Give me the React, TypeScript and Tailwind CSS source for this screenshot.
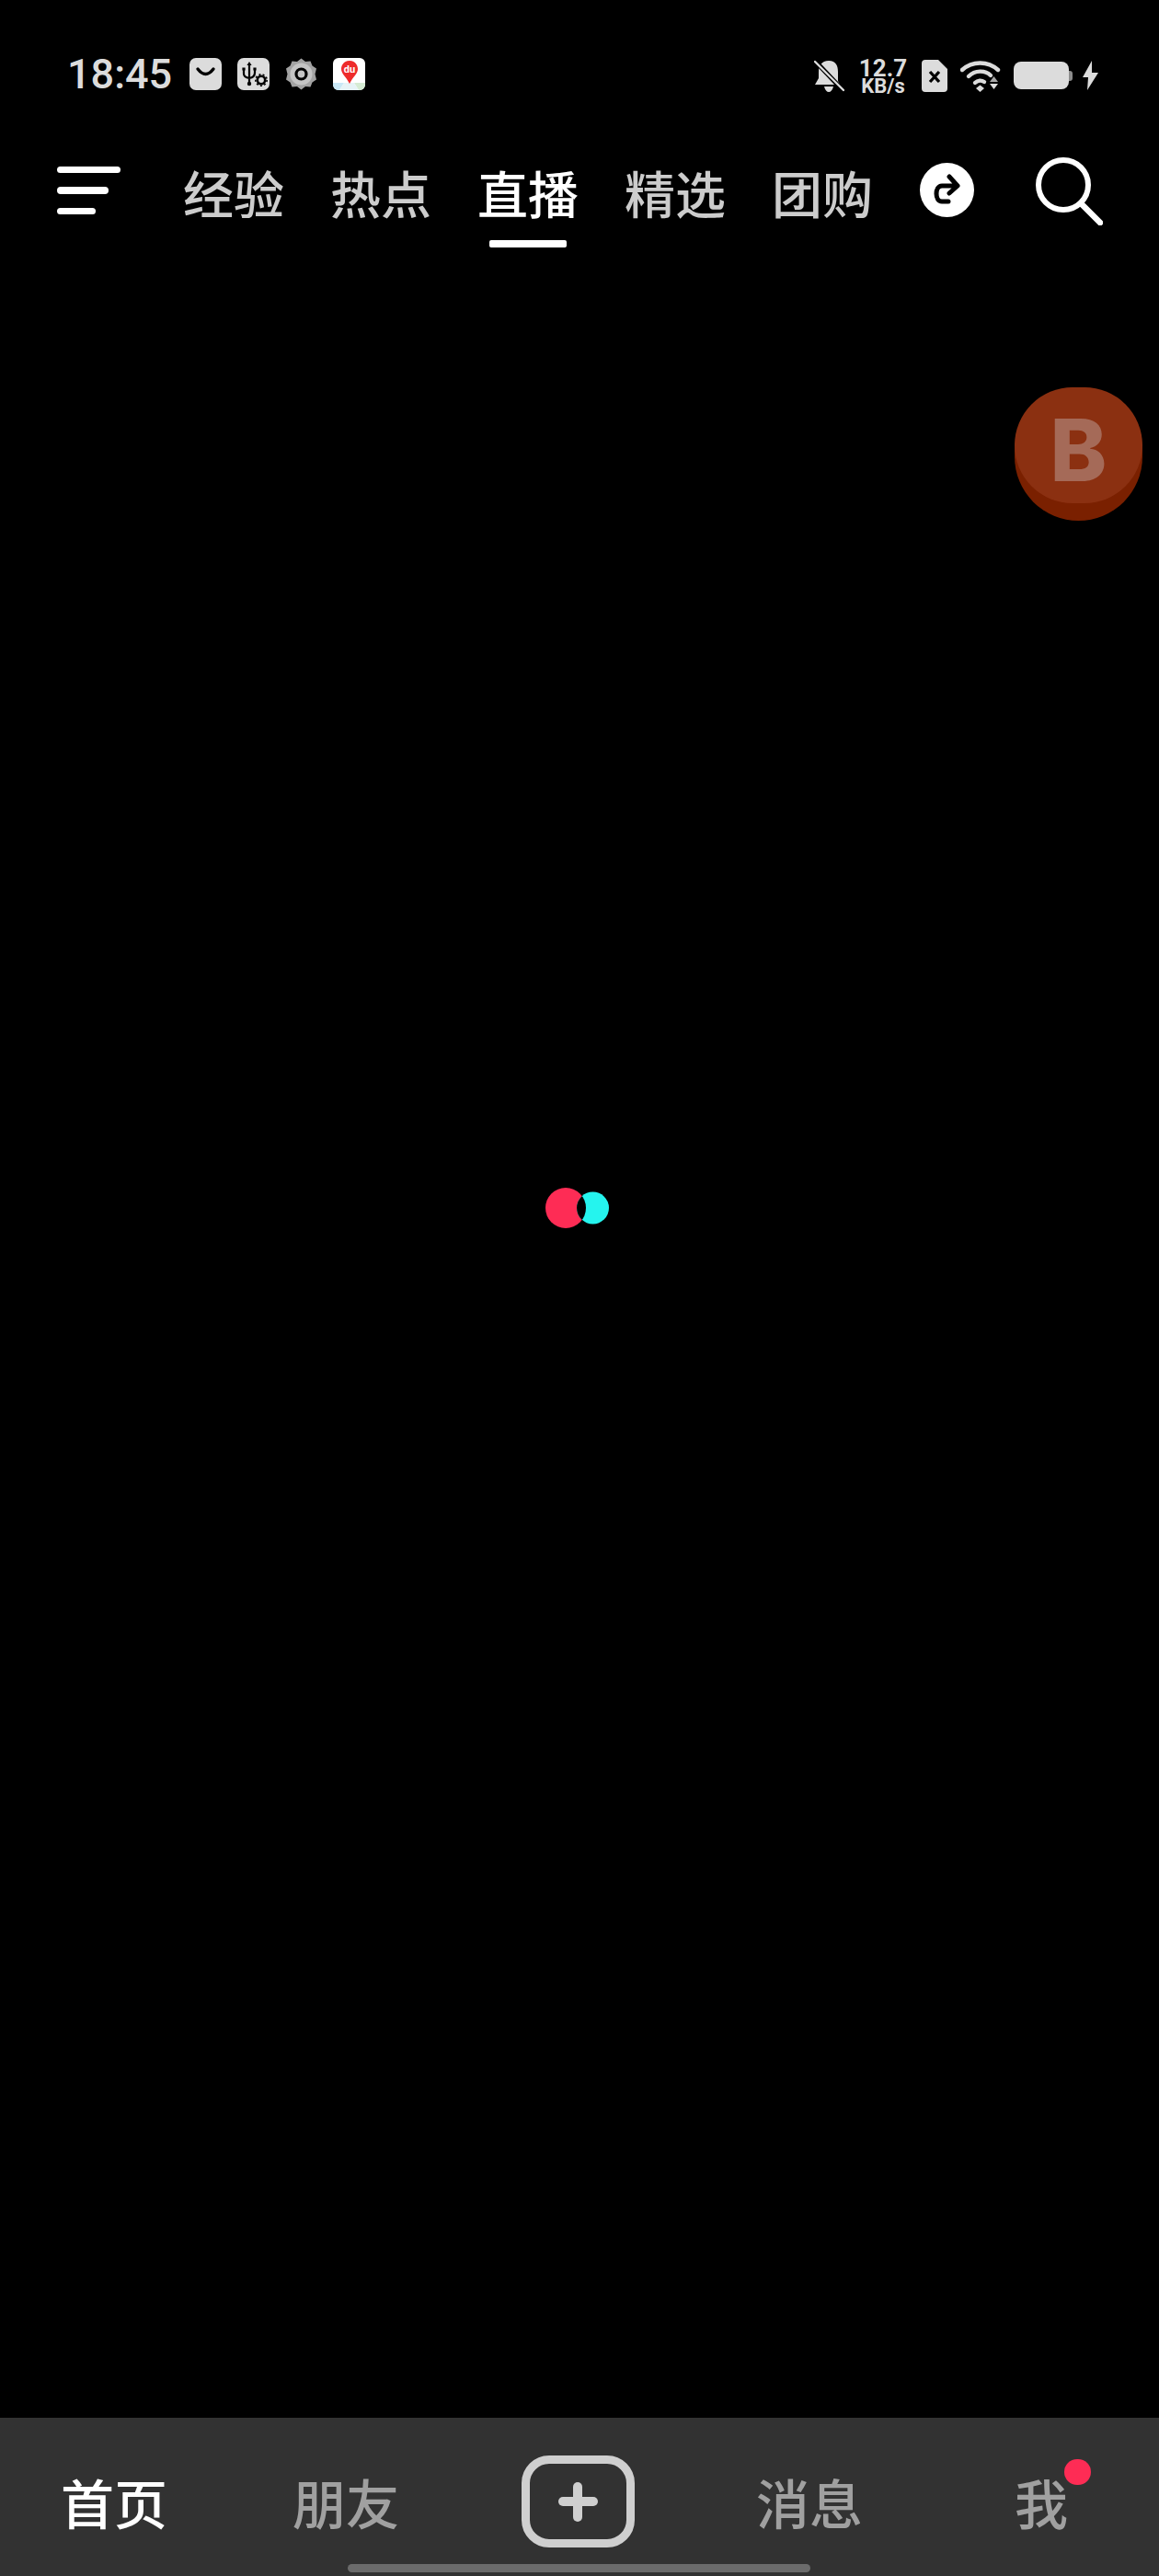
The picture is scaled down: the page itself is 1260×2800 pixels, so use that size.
import React from 'react';

const cjk = { fontFamily: '"Noto Sans CJK SC", sans-serif' };

const topTabs = ['经验', '热点', '直播', '精选', '团购'];
const bottomTabs = ['首页', '朋友', '+', '消息', '我'];

const IconBag = () => (
   <svg width="35" height="35" viewBox="0 0 35 35" className="shrink-0">
      <rect width="35" height="35" rx="7" fill="#dcdcdc" />
      <path d="M9 12 Q17.5 23 26 12" fill="none" stroke="#000" strokeWidth="3.4" strokeLinecap="round" />
   </svg>
);

const IconUsb = () => (
   <svg width="35" height="35" viewBox="0 0 35 35" className="shrink-0">
      <rect width="35" height="35" rx="7" fill="#dcdcdc" />
      <path d="M13 7 V29 M7 13 V17 Q7 21 13 22 Q19 21 19 16 V13" fill="none" stroke="#000" strokeWidth="2.2" />
      <path d="M13 4 L15.6 8 H10.4 Z M5.4 10.5 H8.6 V13.5 H5.4 Z M17.4 10.5 H20.6 V13.5 H17.4 Z" fill="#000" />
      <circle cx="13" cy="28" r="2.2" fill="#000" />
      <circle cx="26" cy="24" r="4.2" fill="none" stroke="#000" strokeWidth="2.6" />
      <circle cx="26" cy="24" r="6.2" fill="none" stroke="#000" strokeWidth="1.6" strokeDasharray="2 2.3" />
   </svg>
);

const IconGear = () => (
   <svg width="35" height="35" viewBox="0 0 35 35" className="shrink-0">
      <path
         d="M17.5 0.5 L22 4 L27.5 3.5 L29.5 8.5 L34 11.5 L32.5 17.5 L34 23.5 L29.5 26.5 L27.5 31.5 L22 31 L17.5 34.5 L13 31 L7.5 31.5 L5.5 26.5 L1 23.5 L2.5 17.5 L1 11.5 L5.5 8.5 L7.5 3.5 L13 4 Z"
         fill="#a2a2a2"
      />
      <circle cx="17.5" cy="17.5" r="12" fill="#c4c4c4" />
      <circle cx="17.5" cy="17.5" r="5.5" fill="#c4c4c4" stroke="#000" strokeWidth="3.2" />
   </svg>
);

const IconMap = () => (
   <svg width="35" height="35" viewBox="0 0 35 35" className="shrink-0">
      <defs>
         <clipPath id="map-clip">
            <rect width="35" height="35" rx="6" />
         </clipPath>
      </defs>
      <g clipPath="url(#map-clip)">
         <rect width="35" height="35" fill="#ffffff" />
         <path d="M0 27 H12 L7 35 H0 Z" fill="#c9e8f6" />
         <path d="M23 27 H35 V35 H28 Z" fill="#d5ebd3" />
         <path d="M12 27 H23 L28 35 H7 Z" fill="#e6f3f6" />
      </g>
      <path d="M18 3 C11 3 9 9 9 12 C9 17 14 20 18 28 C22 20 27 17 27 12 C27 9 25 3 18 3 Z" fill="#ee2b2b" />
      <text x="18" y="16" textAnchor="middle" fontSize="11" fontWeight="700" fill="#fff" fontFamily="Roboto, sans-serif">
         du
      </text>
   </svg>
);

const IconBellOff = () => (
   <svg width="33" height="35" viewBox="0 0 33 35" className="shrink-0">
      <path
         d="M16 1 C8 1 5 7 5 13 V20 L1 27 H28 L26 23 V13 C26 7 24 1 16 1 Z M11 29 H21 C20 33 18 35 16 35 C14 35 12 33 11 29 Z"
         fill="#dcdcdc"
      />
      <path d="M0 0 L33 35" stroke="#000" strokeWidth="5" />
      <path d="M1 2 L32 33" stroke="#dcdcdc" strokeWidth="2.4" strokeLinecap="round" />
   </svg>
);

const IconSim = () => (
   <svg width="28" height="35" viewBox="0 0 28 35" className="shrink-0">
      <path d="M4 0 H18 L28 10 V31 Q28 35 24 35 H4 Q0 35 0 31 V4 Q0 0 4 0 Z" fill="#dcdcdc" />
      <path d="M9 13 L19 24 M19 13 L9 24" stroke="#000" strokeWidth="3.2" />
   </svg>
);

const IconWifi = () => (
   <svg width="44" height="35" viewBox="0 0 44 35" className="shrink-0">
      <path d="M2 11 C13 1 30 1 41 11" fill="none" stroke="#dcdcdc" strokeWidth="4.4" strokeLinecap="round" />
      <path d="M9 18 C16 11 27 11 33 17" fill="none" stroke="#dcdcdc" strokeWidth="4.4" strokeLinecap="round" />
      <path d="M16 25 C19 22 23 22 26 24" fill="none" stroke="#dcdcdc" strokeWidth="4.4" strokeLinecap="round" />
      <path d="M17 31 L21.5 27.5 L26 31 L21.5 35 Z" fill="#dcdcdc" />
      <path d="M36.5 18 L41 24 H32 Z" fill="#a8a8a8" />
      <path d="M32 26 H41 L36.5 32 Z" fill="#dcdcdc" />
   </svg>
);

const IconBolt = () => (
   <svg width="17" height="32" viewBox="0 0 17 32" className="shrink-0">
      <path d="M10 0 L0 18 H6 L5 32 L17 13 H10 Z" fill="#dcdcdc" />
   </svg>
);

const IconShare = () => (
   <svg width="59" height="59" viewBox="0 0 59 59" className="shrink-0">
      <circle cx="29.5" cy="29.5" r="29.5" fill="#fff" />
      <path
         d="M38 25 H24 C16 25 16 42 24 42 H31 M32 15 L41 25 L32 33"
         fill="none"
         stroke="#000"
         strokeWidth="5"
         strokeLinecap="round"
         strokeLinejoin="round"
      />
   </svg>
);

const IconSearch = () => (
   <svg width="73" height="74" viewBox="0 0 73 74" className="shrink-0">
      <circle cx="30" cy="30" r="27" fill="none" stroke="#fff" strokeWidth="6" />
      <path d="M49 50 L70 71" stroke="#fff" strokeWidth="6.5" strokeLinecap="round" />
   </svg>
);

const LoadingDots = () => (
   <svg width="69" height="44" viewBox="0 0 69 44">
      <defs>
         <clipPath id="red-dot">
            <circle cx="22" cy="22" r="22" />
         </clipPath>
      </defs>
      <circle cx="22" cy="22" r="22" fill="#fe2c55" />
      <circle cx="51.5" cy="22" r="17.5" fill="#25f4ee" />
      <circle cx="51.5" cy="22" r="17.5" fill="#000" clipPath="url(#red-dot)" />
   </svg>
);

export default function App() {
   return (
      <div className="relative flex h-[2800px] w-[1260px] flex-col overflow-hidden bg-black" style={cjk}>
         {/* status bar */}
         <div className="flex h-[158px] items-start pl-[73px] pt-[63px]">
            <span
               className="h-[35px] w-[133px] text-[45px] font-medium leading-[35px] text-[#dcdcdc]"
               style={{ fontFamily: 'Roboto, sans-serif' }}
            >
               18:45
            </span>
            <div className="flex items-center gap-[17px]">
               <IconBag />
               <IconUsb />
               <IconGear />
               <IconMap />
            </div>
            <div className="ml-[488px] flex items-center">
               <IconBellOff />
               <div
                  className="ml-[17px] flex w-[50px] flex-col items-center text-[#dcdcdc]"
                  style={{ fontFamily: 'Roboto, sans-serif' }}
               >
                  <span className="h-[22px] text-[26px] font-bold leading-[22px]">12.7</span>
                  <span className="h-[16px] text-[22px] font-bold leading-[18px]">KB/s</span>
               </div>
               <div className="ml-[17px]">
                  <IconSim />
               </div>
               <div className="ml-[14px]">
                  <IconWifi />
               </div>
               <div className="ml-[14px] flex items-center">
                  <div className="h-[30px] w-[60px] rounded-[8px] bg-[#dcdcdc]" />
                  <div className="h-[11px] w-[4px] rounded-r-[3px] bg-[#8c8c8c]" />
               </div>
               <div className="ml-[11px]">
                  <IconBolt />
               </div>
            </div>
         </div>

         {/* top tabs */}
         <div className="flex h-[112px] items-start pl-[62px]">
            <div className="mt-[23px] flex w-[69px] shrink-0 flex-col gap-[15px]">
               <div className="h-[7px] w-[69px] rounded-full bg-white" />
               <div className="h-[8px] w-[56px] rounded-full bg-white" />
               <div className="h-[7px] w-[42px] rounded-full bg-white" />
            </div>
            <div className="ml-[69px] flex gap-[52px] pt-[20px]">
               {topTabs.map((tab) => (
                  <div key={tab} className="flex w-[108px] flex-col items-center">
                     <span
                        className={`h-[60px] whitespace-nowrap text-[55px] font-medium leading-[60px] ${
                           tab === '直播' ? 'text-white' : 'text-[#cccccc]'
                        }`}
                     >
                        {tab}
                     </span>
                     <div className={`mt-[23px] h-[8px] w-[84px] rounded-[2px] ${tab === '直播' ? 'bg-white' : 'bg-transparent'}`} />
                  </div>
               ))}
            </div>
            <div className="ml-[52px] mt-[19px]">
               <IconShare />
            </div>
            <div className="ml-[67px] mt-[13px]">
               <IconSearch />
            </div>
         </div>

         {/* content, just the loader */}
         <div className="flex flex-1 justify-center pr-[5px] pt-[1021px]">
            <LoadingDots />
         </div>

         {/* floating red button */}
         <div className="absolute left-[1103px] top-[421px] h-[145px] w-[139px] rounded-full bg-[#7a2000]">
            <div
               className="flex h-[126px] w-[139px] items-center justify-center rounded-full bg-[#8b3011] pt-[12px] text-[93px] font-extrabold text-[#a56a58]"
               style={{ fontFamily: 'Inter, sans-serif' }}
            >
               B
            </div>
         </div>

         {/* bottom tabs */}
         <div className="relative grid h-[172px] grid-cols-5 bg-[#323232]">
            {bottomTabs.map((tab, i) => (
               <div key={tab} className="flex h-[172px] items-start justify-center pr-[4px] pt-[41px]">
                  {tab === '+' ? (
                     <div className="flex h-[100px] w-[123px] items-center justify-center rounded-[30px] border-[9px] border-[#cfcfcf]">
                        <div className="relative h-[10px] w-[43px] rounded-full bg-[#cfcfcf]">
                           <div className="absolute left-[16.5px] top-[-16.5px] h-[43px] w-[10px] rounded-full bg-[#cfcfcf]" />
                        </div>
                     </div>
                  ) : (
                     <span
                        className={`relative mt-[10px] whitespace-nowrap text-[58px] font-medium leading-[80px] ${
                           i === 0 ? 'text-white' : 'text-[#a0a0a0]'
                        }`}
                     >
                        {tab}
                        {tab === '我' && <span className="absolute left-[54px] top-[-6px] h-[28px] w-[29px] rounded-full bg-[#fe2c55]" />}
                     </span>
                  )}
               </div>
            ))}
            <div className="absolute bottom-[4px] left-[378px] h-[9px] w-[503px] rounded-full bg-[#6b6b6b]" />
         </div>
      </div>
   );
}
